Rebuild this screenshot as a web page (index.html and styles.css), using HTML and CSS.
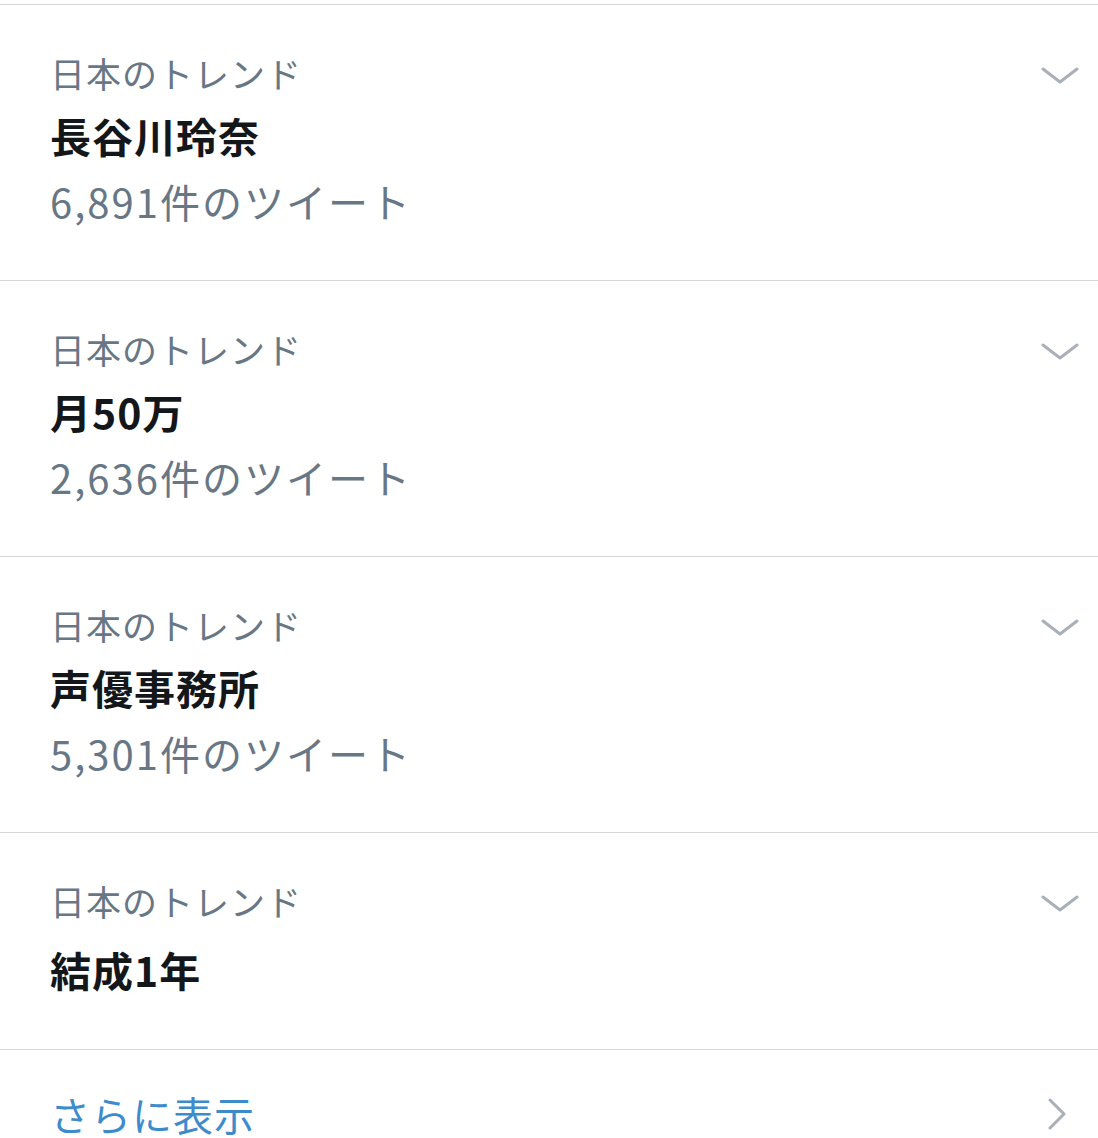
FILE: index.html
```
<!DOCTYPE html>
<html lang="ja">
<head>
<meta charset="utf-8">
<link rel="stylesheet" href="styles.css">
</head>
<body>
<div class="trends">
  <div class="trend">
    <div class="trend-body">
      <div class="trend-label">日本のトレンド</div>
      <div class="trend-title">長谷川玲奈</div>
      <div class="trend-count">6,891件のツイート</div>
    </div>
    <svg class="chev-down" width="38" height="18" viewBox="0 0 38 18"><polyline points="2,2 19,15 36,2" /></svg>
  </div>
  <div class="trend">
    <div class="trend-body">
      <div class="trend-label">日本のトレンド</div>
      <div class="trend-title">月50万</div>
      <div class="trend-count">2,636件のツイート</div>
    </div>
    <svg class="chev-down" width="38" height="18" viewBox="0 0 38 18"><polyline points="2,2 19,15 36,2" /></svg>
  </div>
  <div class="trend">
    <div class="trend-body">
      <div class="trend-label">日本のトレンド</div>
      <div class="trend-title">声優事務所</div>
      <div class="trend-count">5,301件のツイート</div>
    </div>
    <svg class="chev-down" width="38" height="18" viewBox="0 0 38 18"><polyline points="2,2 19,15 36,2" /></svg>
  </div>
  <div class="trend trend-short">
    <div class="trend-body">
      <div class="trend-label">日本のトレンド</div>
      <div class="trend-title">結成1年</div>
    </div>
    <svg class="chev-down" width="38" height="18" viewBox="0 0 38 18"><polyline points="2,2 19,15 36,2" /></svg>
  </div>
  <div class="more">
    <span class="more-text">さらに表示</span>
    <svg class="chev-right" width="20" height="32" viewBox="0 0 20 32"><polyline points="3,2 17,16 3,30" /></svg>
  </div>
</div>
</body>
</html>
```
FILE: styles.css
```
html, body {
  margin: 0;
  padding: 0;
  background: #ffffff;
}
body {
  font-family: "Noto Sans CJK JP", "Noto Sans", sans-serif;
}
.trends {
  padding-top: 4px;
}
.trend {
  display: flex;
  justify-content: space-between;
  align-items: flex-start;
  border-top: 1px solid #d5d7d9;
  padding: 39px 19px 46px 50px;
}
.trend-short {
  padding-bottom: 47px;
}
.trend-label {
  font-size: 35px;
  line-height: 58px;
  height: 58px;
  color: #687785;
  letter-spacing: 1px;
}
.trend-title {
  font-size: 41px;
  line-height: 66px;
  height: 66px;
  font-weight: 700;
  color: #14171a;
  letter-spacing: 1px;
}
.trend-short .trend-title {
  margin-top: 6px;
}
.trend-count {
  font-size: 40px;
  line-height: 66px;
  height: 66px;
  color: #687785;
  letter-spacing: 2px;
}
.chev-down {
  margin-top: 23px;
  flex: none;
}
.chev-down polyline,
.chev-right polyline {
  fill: none;
  stroke: #a9b0b7;
  stroke-width: 3;
  stroke-linecap: round;
  stroke-linejoin: round;
}
.more {
  display: flex;
  justify-content: space-between;
  align-items: center;
  border-top: 1px solid #d5d7d9;
  padding: 31px 31px 0 50px;
  height: 66px;
}
.more-text {
  font-size: 40px;
  line-height: 66px;
  color: #3d8bcb;
  letter-spacing: 1px;
}
.chev-right {
  flex: none;
}
```
